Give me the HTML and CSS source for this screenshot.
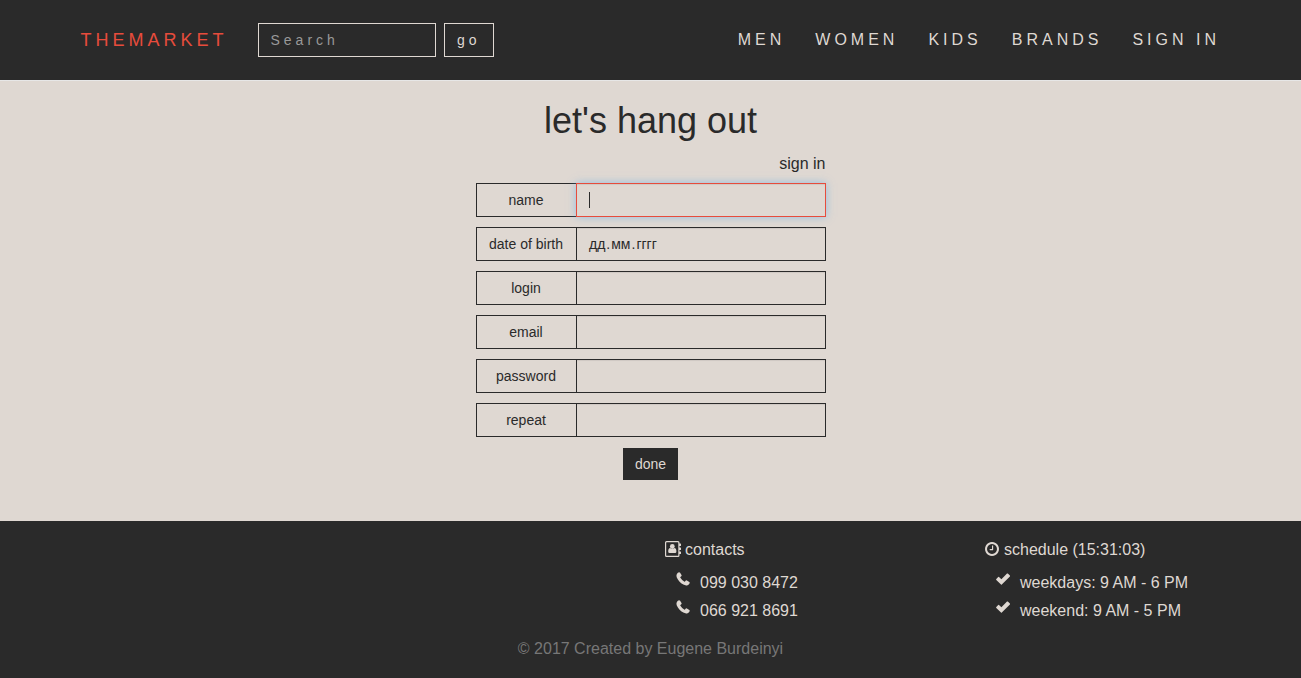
FILE: index.html
```html
<!DOCTYPE html>
<html lang="en">
<head>
<meta charset="utf-8">
<title>THEMARKET</title>
<link rel="stylesheet" href="styles.css">
</head>
<body>
<svg class="sprite" width="0" height="0">
  <symbol id="phone" viewBox="0 0 14 14"><path d="M2.400.4Q3.500-.2 4.100.8L5.500 3Q5.900 3.700 5.300 4.200L4.400 4.900Q4.100 5.300 4.400 5.800Q5.900 8.200 8.200 9.600Q8.700 9.900 9 9.400L9.800 8.600Q10.300 8.100 10.900 8.500L13.300 9.900Q14 10.400 13.500 11.400C12 13.900 9.500 13.800 7.300 12.600C4.300 11 2 8.300.8 5.500C0 3.300.7 1.400 2.400.4Z"/></symbol>
  <symbol id="check" viewBox="0 0 14 12"><path d="M.3 6 2.200 4Q2.600 3.600 3 4L5.400 6.300 11 .6Q11.400.2 11.800.6L13.900 2.600Q14.300 3 13.900 3.400L5.800 11.500Q5.400 11.900 5 11.500L.3 6.900Q-.1 6.500.3 6Z"/></symbol>
  <symbol id="clock" viewBox="128 128 1536 1536"><path d="M1024 544v448q0 14-9 23t-23 9h-320q-14 0-23-9t-9-23v-64q0-14 9-23t23-9h224v-352q0-14 9-23t23-9h64q14 0 23 9t9 23zm416 352q0-148-73-273t-198-198-273-73-273 73-198 198-73 273 73 273 198 198 273 73 273-73 198-198 73-273zm224 0q0 209-103 385.500t-279.500 279.500-385.500 103-385.500-103-279.500-279.500-103-385.500 103-385.500 279.500-279.500 385.500-103 385.500 103 279.500 279.500 103 385.500z"/></symbol>
  <symbol id="book" viewBox="0 0 16 16"><path fill-rule="evenodd" d="M1.500 0H13Q14.500 0 14.500 1.500V2.500H15.500Q16 2.500 16 3V4.500Q16 5 15.500 5H14.500V6.500H15.500Q16 6.500 16 7V8.500Q16 9 15.500 9H14.500V10.500H15.500Q16 10.500 16 11V12.500Q16 13 15.500 13H14.500V14.500Q14.500 16 13 16H1.500Q0 16 0 14.500V1.500Q0 0 1.500 0ZM1.700 1.200Q1.200 1.200 1.200 1.700V14.300Q1.200 14.800 1.700 14.800H12.800Q13.300 14.800 13.300 14.300V1.700Q13.300 1.200 12.800 1.200Z"/><circle cx="7.300" cy="5.500" r="2.400"/><path d="M5.200 7Q3.200 7 3.200 10.500Q3.200 12 4.500 12H10.100Q11.400 12 11.400 10.500Q11.400 7 9.400 7Q7.300 8.800 5.200 7Z"/></symbol>
</svg>
<header class="header">
  <a class="brand">THEMARKET</a>
  <form class="search">
    <input class="search-input" type="text" placeholder="Search">
    <button class="search-button" type="button">go</button>
  </form>
  <nav class="nav"><a>MEN</a><a>WOMEN</a><a>KIDS</a><a>BRANDS</a><a>SIGN IN</a></nav>
</header>
<main class="main">
  <h1 class="title">let's hang out</h1>
  <form class="form">
    <a class="signin">sign in</a>
    <div class="row"><label class="label">name</label><div class="field focused"><span class="caret"></span></div></div>
    <div class="row"><label class="label">date of birth</label><div class="field date"><span>дд</span><span>.</span><span>мм</span><span>.</span><span>гггг</span></div></div>
    <div class="row"><label class="label">login</label><input class="field" type="text"></div>
    <div class="row"><label class="label">email</label><input class="field" type="email"></div>
    <div class="row"><label class="label">password</label><input class="field" type="password"></div>
    <div class="row"><label class="label">repeat</label><input class="field" type="password"></div>
    <button class="done" type="button">done</button>
  </form>
</main>
<footer class="footer">
  <div class="columns">
    <section class="column">
      <div class="heading"><svg class="icon-book"><use href="#book"/></svg>contacts</div>
      <div class="item"><svg class="icon-phone"><use href="#phone"/></svg>099 030 8472</div>
      <div class="item"><svg class="icon-phone"><use href="#phone"/></svg>066 921 8691</div>
    </section>
    <section class="column">
      <div class="heading"><svg class="icon-clock"><use href="#clock"/></svg>schedule (15:31:03)</div>
      <div class="item"><svg class="icon-check"><use href="#check"/></svg>weekdays: 9 AM - 6 PM</div>
      <div class="item"><svg class="icon-check"><use href="#check"/></svg>weekend: 9 AM - 5 PM</div>
    </section>
  </div>
  <div class="copyright">© 2017 Created by Eugene Burdeinyi</div>
</footer>
</body>
</html>
```
FILE: styles.css
```css
* { box-sizing: border-box; }
body {
  margin: 0;
  height: 678px;
  display: flex;
  flex-direction: column;
  overflow: hidden;
  background: #dfd8d2;
  color: #2a2a2a;
  font-family: "Liberation Sans", Arial, sans-serif;
  font-size: 16px;
}
input, button { font: inherit; color: inherit; margin: 0; border-radius: 0; outline: 0; }
svg { fill: #dfd8d2; flex: none; overflow: visible; }
.sprite { position: absolute; }
.header {
  height: 81px;
  flex: none;
  display: flex;
  align-items: center;
  padding: 0 81px 0 80.5px;
  background: #2a2a2a;
  border-bottom: 1px solid #e7e7e7;
  letter-spacing: 4px;
  color: #dfd8d2;
}
.brand { width: 177.5px; padding-bottom: 1px; font-size: 18px; line-height: 20px; letter-spacing: 4px; color: #e74c3c; }
.search { display: flex; gap: 8px; font-size: 14px; }
.search-input {
  width: 178px;
  height: 34px;
  padding: 6px 11.5px;
  border: 1px solid #dfd8d2;
  background: transparent;
  letter-spacing: 4px;
}
.search-input::placeholder { color: #999; }
.search-button { width: 50px; height: 34px; padding: 0 0 0 12px; text-align: left; border: 1px solid #dfd8d2; background: transparent; letter-spacing: 4px; }
.nav { margin-left: auto; display: flex; gap: 30px; line-height: 20px; }
.main { height: 440px; flex: none; display: flex; flex-direction: column; align-items: center; }
.title { margin: 20px 0 10px; font-size: 36px; font-weight: 400; line-height: 40px; }
.form { width: 350px; display: flex; flex-direction: column; }
.signin { align-self: flex-end; line-height: 25px; margin-bottom: 7px; }
.row { display: flex; height: 34px; margin-bottom: 10px; font-size: 14px; }
.label { width: 100px; border: 1px solid #2a2a2a; border-right: 0; line-height: 32px; text-align: center; }
.field {
  width: 250px;
  padding: 0 12px;
  border: 1px solid #2a2a2a;
  background: transparent;
  display: flex;
  align-items: center;
  box-shadow: inset 0 1px 1px rgba(0, 0, 0, .075);
}
.focused { border-color: #e74c3c; box-shadow: inset 0 1px 1px rgba(0, 0, 0, .075), 0 0 8px rgba(102, 175, 233, .6); }
.caret { width: 1px; height: 16px; background: #2a2a2a; }
.date { gap: 1px; padding-left: 12.5px; }
.done { align-self: center; width: 55px; height: 32px; margin-top: 1px; padding: 0; border: 0; background: #2a2a2a; color: #dfd8d2; font-size: 14px; }
.footer { flex: 1; background: #2a2a2a; color: #dfd8d2; }
.columns { display: flex; padding: 17px 0 0 665px; }
.column { width: 320px; flex: none; }
.heading { display: flex; align-items: center; height: 23px; margin-bottom: 9px; }
.item { display: flex; height: 28px; line-height: 26px; padding-left: 10.5px; }
.icon-book { width: 16px; height: 16px; margin: -1px 4px 0 0; }
.icon-clock { width: 14px; height: 14px; margin: -1px 5px 0 0; }
.icon-phone { width: 14px; height: 14px; margin: 2px 10.5px 0 0; }
.icon-check { width: 14px; height: 12px; margin: 3px 10.5px 0 0; }
.copyright { margin-top: 11px; text-align: center; line-height: 23px; color: #777; }
```
